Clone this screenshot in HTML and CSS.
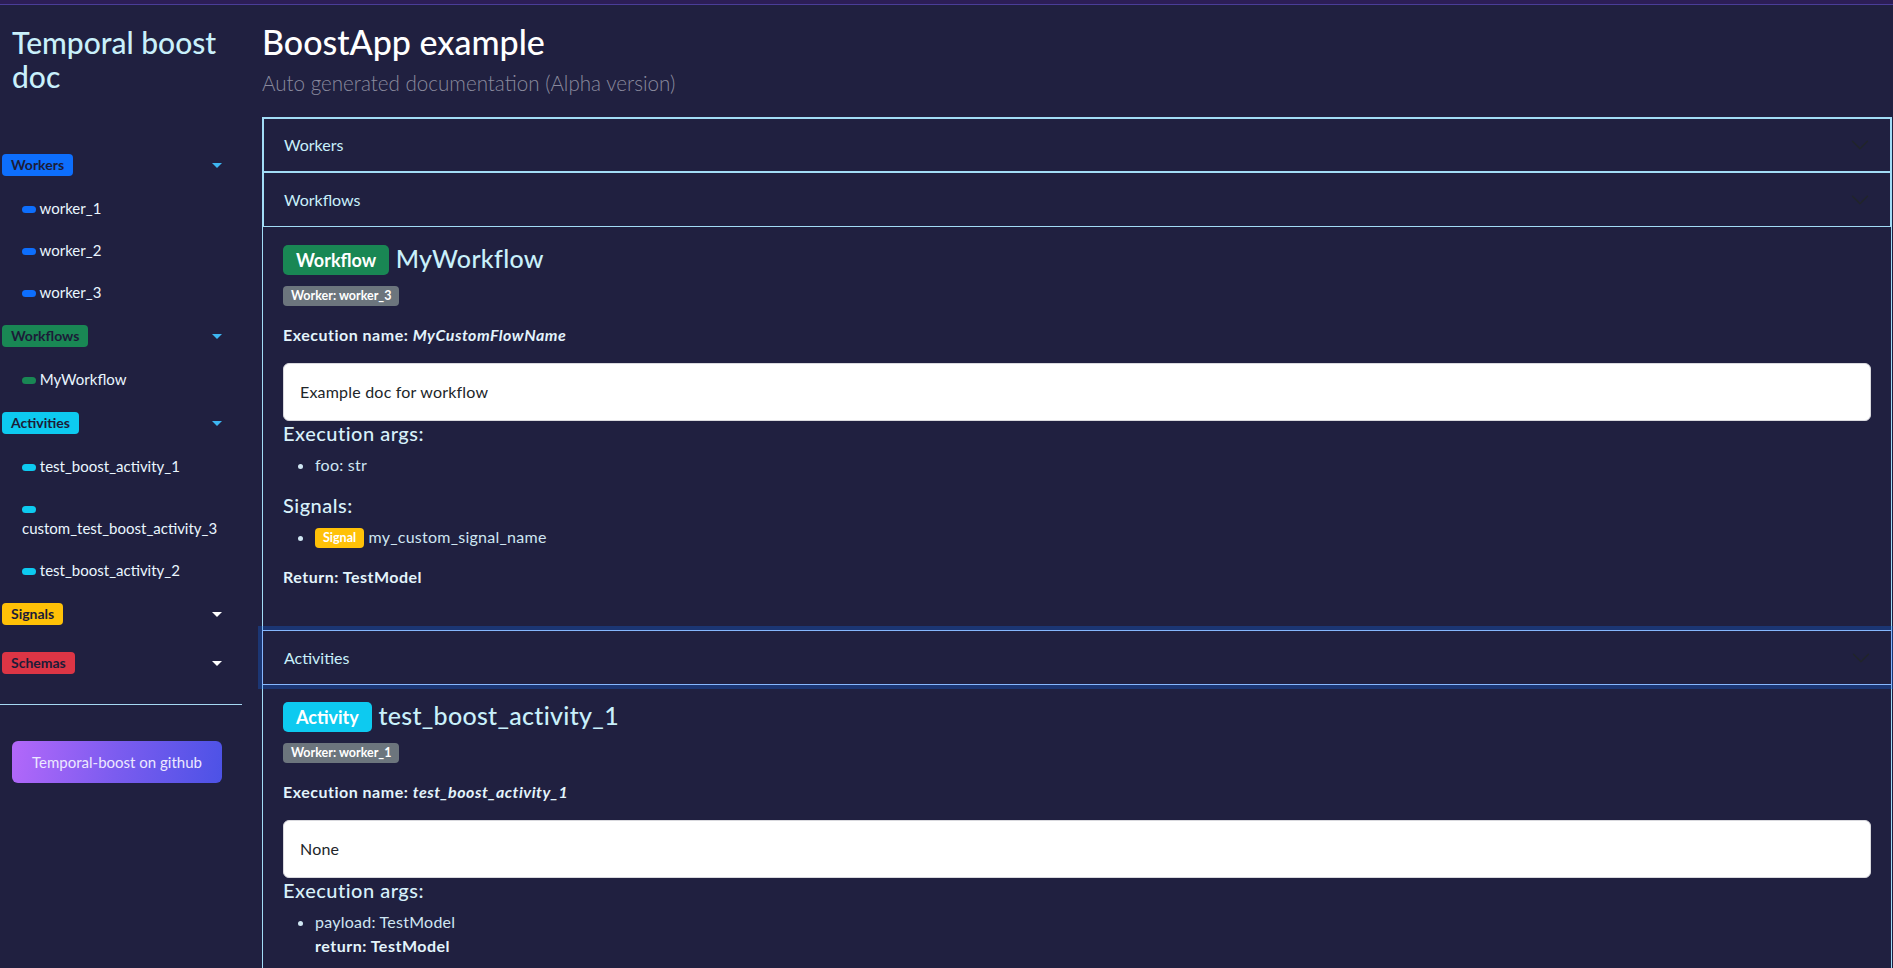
FILE: index.html
```html
<!DOCTYPE html>
<html lang="en">
<head>
<meta charset="utf-8">
<title>Temporal boost doc</title>
<link rel="stylesheet" href="styles.css">
</head>
<body>
<div class="topbar"></div>
<div class="layout">
  <aside class="sidebar">
    <h3 class="brand">Temporal boost doc</h3>
    <nav class="nav">
      <div class="group">
        <div class="group-head"><span class="tag tag-blue">Workers</span><span class="caret caret-open"></span></div>
        <ul class="items">
          <li><span class="dot dot-blue"></span> worker_1</li>
          <li><span class="dot dot-blue"></span> worker_2</li>
          <li><span class="dot dot-blue"></span> worker_3</li>
        </ul>
      </div>
      <div class="group">
        <div class="group-head"><span class="tag tag-green">Workflows</span><span class="caret caret-open"></span></div>
        <ul class="items">
          <li><span class="dot dot-green"></span> MyWorkflow</li>
        </ul>
      </div>
      <div class="group">
        <div class="group-head"><span class="tag tag-cyan">Activities</span><span class="caret caret-open"></span></div>
        <ul class="items">
          <li><span class="dot dot-cyan"></span> test_boost_activity_1</li>
          <li><span class="dot dot-cyan"></span> custom_test_boost_activity_3</li>
          <li><span class="dot dot-cyan"></span> test_boost_activity_2</li>
        </ul>
      </div>
      <div class="group group-collapsed">
        <div class="group-head"><span class="tag tag-yellow">Signals</span><span class="caret"></span></div>
      </div>
      <div class="group group-last">
        <div class="group-head"><span class="tag tag-red">Schemas</span><span class="caret"></span></div>
      </div>
    </nav>
    <hr class="divider">
    <a class="gh-btn" href="#">Temporal-boost on github</a>
  </aside>

  <main class="main">
    <h1 class="page-title">BoostApp example</h1>
    <p class="subtitle">Auto generated documentation (Alpha version)</p>

    <div class="accordion">
      <div class="acc-head acc-first">
        <span>Workers</span>
        <svg class="chev" viewBox="0 0 16 16" width="20" height="20"><path fill="#212529" fill-rule="evenodd" d="M1.646 4.646a.5.5 0 0 1 .708 0L8 10.293l5.646-5.647a.5.5 0 0 1 .708.708l-6 6a.5.5 0 0 1-.708 0l-6-6a.5.5 0 0 1 0-.708z"/></svg>
      </div>
      <div class="acc-head acc-second">
        <span>Workflows</span>
        <svg class="chev" viewBox="0 0 16 16" width="20" height="20"><path fill="#212529" fill-rule="evenodd" d="M1.646 4.646a.5.5 0 0 1 .708 0L8 10.293l5.646-5.647a.5.5 0 0 1 .708.708l-6 6a.5.5 0 0 1-.708 0l-6-6a.5.5 0 0 1 0-.708z"/></svg>
      </div>
      <div class="acc-body acc-body-gap">
        <h4 class="entity"><span class="kind kind-green">Workflow</span> MyWorkflow</h4>
        <div class="worker-line"><span class="mini mini-gray">Worker: worker_3</span></div>
        <p class="exec"><strong>Execution name: <em>MyCustomFlowName</em></strong></p>
        <div class="doc-card">Example doc for workflow</div>
        <h5 class="sub">Execution args:</h5>
        <ul class="args">
          <li>foo: str</li>
        </ul>
        <h5 class="sub">Signals:</h5>
        <ul class="args">
          <li><span class="mini mini-yellow">Signal</span> my_custom_signal_name</li>
        </ul>
        <p class="exec"><strong>Return: TestModel</strong></p>
      </div>
      <div class="acc-head acc-focus">
        <span>Activities</span>
        <svg class="chev" viewBox="0 0 16 16" width="20" height="20"><path fill="#212529" fill-rule="evenodd" d="M1.646 4.646a.5.5 0 0 1 .708 0L8 10.293l5.646-5.647a.5.5 0 0 1 .708.708l-6 6a.5.5 0 0 1-.708 0l-6-6a.5.5 0 0 1 0-.708z"/></svg>
      </div>
      <div class="acc-body acc-body-tight">
        <h4 class="entity"><span class="kind kind-cyan">Activity</span> test_boost_activity_1</h4>
        <div class="worker-line"><span class="mini mini-gray">Worker: worker_1</span></div>
        <p class="exec"><strong>Execution name: <em>test_boost_activity_1</em></strong></p>
        <div class="doc-card">None</div>
        <h5 class="sub">Execution args:</h5>
        <ul class="args">
          <li>payload: TestModel</li>
          <li class="ret"><strong>return: TestModel</strong></li>
        </ul>
      </div>
    </div>
  </main>
</div>
</body>
</html>
```

FILE: styles.css
```css
* { box-sizing: border-box; }

html, body {
  margin: 0;
  padding: 0;
  background: #202040;
  height: 100%;
  overflow: hidden;
}

body {
  font-family: Lato, "Open Sans", "DejaVu Sans", sans-serif;
  color: #d8f1fb;
  font-size: 16px;
  line-height: 1.5;
}

.topbar {
  height: 5px;
  background: #2c1e56;
  border-bottom: 1px solid #4a3d98;
}

.layout {
  display: flex;
  gap: 20px;
  padding-right: 1px;
}

/* ---------- sidebar ---------- */
.sidebar {
  width: 242px;
  flex: none;
}

.brand {
  margin: 20px 0 0 12px;
  font-size: 30px;
  line-height: 34px;
  font-weight: 500;
  color: #c9f0fb;
}

.nav {
  margin-top: 61px;
}

.group {
  margin-bottom: 12px;
}
.group-collapsed { margin-bottom: 27px; }
.group-last { margin-bottom: 0; }

.group-head {
  display: flex;
  align-items: center;
  justify-content: space-between;
  height: 22px;
  padding: 0 20px 0 2px;
}

.tag {
  display: inline-block;
  font-size: 14px;
  font-weight: 700;
  line-height: 22px;
  padding: 0 9px;
  border-radius: 4px;
  color: #1c1c38;
}
.tag-blue { background: #0d6efd; }
.tag-green { background: #198754; }
.tag-cyan { background: #0dcaf0; }
.tag-yellow { background: #ffc107; }
.tag-red { background: #dc3545; }

.caret {
  width: 0;
  height: 0;
  border-left: 5px solid transparent;
  border-right: 5px solid transparent;
  border-top: 5px solid #ffffff;
}
.caret-open { border-top-color: #3db6f2; }

.items {
  list-style: none;
  margin: 11px 0 0;
  padding: 0 20px 0 22px;
}
.items li {
  padding: 11px 0;
  line-height: 20px;
  font-size: 15px;
  color: #eaf6ff;
}

.dot {
  display: inline-block;
  width: 14px;
  height: 7px;
  border-radius: 4px;
  vertical-align: middle;
  margin-top: -2px;
}
.dot-blue { background: #0d6efd; }
.dot-green { background: #198754; }
.dot-cyan { background: #0dcaf0; }

.divider {
  margin: 30px 0 0;
  border: 0;
  border-top: 1px solid #a6d8f2;
  height: 0;
}

.gh-btn {
  display: flex;
  align-items: center;
  justify-content: center;
  margin: 36px 0 0 12px;
  width: 210px;
  height: 42px;
  border-radius: 6px;
  background: linear-gradient(100deg, #b368fa 0%, #7b5cef 50%, #4c52e6 100%);
  color: #ece8ff;
  font-size: 15px;
  text-decoration: none;
}

/* ---------- main ---------- */
.main {
  flex: 1;
  min-width: 0;
}

.page-title {
  margin: 17px 0 0;
  font-size: 34px;
  line-height: 40px;
  font-weight: 500;
  color: #ffffff;
}

.subtitle {
  margin: 6px 0 0;
  font-size: 20.6px;
  line-height: 31px;
  font-weight: 300;
  color: #8a8a9e;
}

.accordion {
  margin-top: 18px;
}

.acc-head {
  display: flex;
  align-items: center;
  justify-content: space-between;
  padding: 0 20px;
  color: #c9f0fb;
  font-size: 16px;
  border-style: solid;
  border-color: #a2dcf6;
}
.acc-first {
  height: 56px;
  border-width: 2px;
}
.acc-second {
  height: 54px;
  border-width: 0 2px 1px 2px;
}
.acc-focus {
  height: 55px;
  border-width: 1px;
  border-color: #86b7fe;
  padding-left: 21px;
  box-shadow: 0 0 0 4px rgba(13, 110, 253, 0.28);
  position: relative;
  z-index: 1;
}

.chev { flex: none; display: block; }

.acc-body {
  border-left: 1px solid #a2dcf6;
  border-right: 1px solid #a2dcf6;
  padding: 15px 20px 60px;
}
.acc-body-gap {
  padding-bottom: 25px;
}
.acc-body-tight {
  padding-top: 14px;
}

.entity {
  margin: 0 0 8px;
  font-size: 25px;
  line-height: 32px;
  font-weight: 500;
  letter-spacing: 0.3px;
  color: #c9f0fb;
}

.kind {
  display: inline-block;
  font-size: 18px;
  font-weight: 700;
  line-height: 18px;
  letter-spacing: 0;
  padding: 6px 13px 6px;
  border-radius: 5px;
  color: #ffffff;
  vertical-align: 1px;
}
.kind-green { background: #198754; }
.kind-cyan { background: #0dcaf0; }

.worker-line {
  line-height: 24px;
  margin-bottom: 16px;
}

.mini {
  display: inline-block;
  font-size: 12.5px;
  font-weight: 700;
  line-height: 12px;
  padding: 4px 8px;
  border-radius: 4px;
  color: #ffffff;
  vertical-align: 1px;
  letter-spacing: 0;
}
.mini-gray { background: #6c757d; }
.mini-yellow { background: #ffc107; }

.exec {
  margin: 0 0 16px;
  color: #e3f4fc;
  letter-spacing: 0.5px;
}

.doc-card {
  background: #ffffff;
  color: #212529;
  border: 1px solid #d9d9de;
  border-radius: 6px;
  padding: 16px;
  letter-spacing: 0.2px;
}

.sub {
  margin: 0 0 8px;
  font-size: 20px;
  line-height: 24px;
  font-weight: 500;
  letter-spacing: 0.5px;
  color: #d8f1fb;
}

.args {
  margin: 0 0 16px;
  padding-left: 32px;
  color: #cfe6f2;
  letter-spacing: 0.25px;
}
.args .ret {
  list-style: none;
  color: #e3f4fc;
  letter-spacing: 0.5px;
}
```
